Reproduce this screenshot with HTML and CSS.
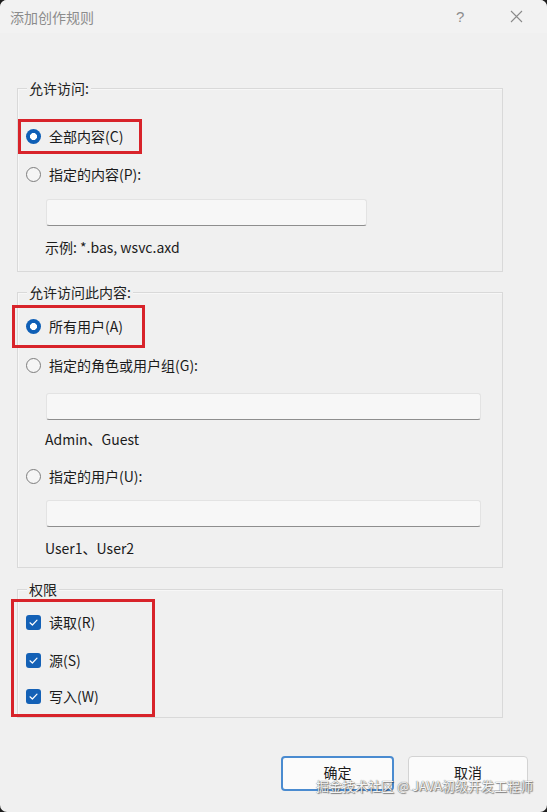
FILE: index.html
```html
<!DOCTYPE html>
<html lang="zh-CN">
<head>
<meta charset="utf-8">
<title>添加创作规则</title>
<link rel="stylesheet" href="styles.css">
</head>
<body>
<div class="window">
  <div class="titlebar">
    <span class="title">添加创作规则</span>
    <span class="help">?</span>
    <span class="close">
      <svg width="13" height="13" viewBox="0 0 13 13"><path d="M1 1 L12 12 M12 1 L1 12" stroke="#8a8a8a" stroke-width="1.1" fill="none"/></svg>
    </span>
  </div>

  <div class="group g1">
    <div class="legend">允许访问:</div>
    <div class="mark mark1">
      <div class="row"><span class="radio on"></span><span>全部内容(C)</span></div>
    </div>
    <div class="row r2"><span class="radio"></span><span>指定的内容(P):</span></div>
    <div class="input in1"></div>
    <div class="hint h1">示例: *.bas, wsvc.axd</div>
  </div>

  <div class="group g2">
    <div class="legend">允许访问此内容:</div>
    <div class="mark mark2">
      <div class="row"><span class="radio on"></span><span>所有用户(A)</span></div>
    </div>
    <div class="row r4"><span class="radio"></span><span>指定的角色或用户组(G):</span></div>
    <div class="input in2"></div>
    <div class="hint h2">Admin、Guest</div>
    <div class="row r5"><span class="radio"></span><span>指定的用户(U):</span></div>
    <div class="input in3"></div>
    <div class="hint h3">User1、User2</div>
  </div>

  <div class="group g3">
    <div class="legend">权限</div>
    <div class="mark mark3">
      <div class="row"><span class="check"><svg width="15" height="15" viewBox="0 0 15 15"><path d="M4 7.8 L6.4 10 L11 5.2" stroke="#fff" stroke-width="1.2" fill="none" stroke-linecap="round" stroke-linejoin="round"/></svg></span><span>读取(R)</span></div>
      <div class="row c2"><span class="check"><svg width="15" height="15" viewBox="0 0 15 15"><path d="M4 7.8 L6.4 10 L11 5.2" stroke="#fff" stroke-width="1.2" fill="none" stroke-linecap="round" stroke-linejoin="round"/></svg></span><span>源(S)</span></div>
      <div class="row c3"><span class="check"><svg width="15" height="15" viewBox="0 0 15 15"><path d="M4 7.8 L6.4 10 L11 5.2" stroke="#fff" stroke-width="1.2" fill="none" stroke-linecap="round" stroke-linejoin="round"/></svg></span><span>写入(W)</span></div>
    </div>
  </div>

  <div class="footer">
    <button class="btn primary">确定</button>
    <button class="btn">取消</button>
  </div>

  <div class="watermark">掘金技术社区 @ JAVA初级开发工程师</div>
</div>
</body>
</html>
```

FILE: styles.css
```css
* { box-sizing: border-box; }
html, body { margin: 0; padding: 0; }
body {
  background: #1e1e1e;
  font-family: "Noto Sans CJK SC", "Noto Sans", sans-serif;
  font-size: 14px;
  color: #1b1b1b;
}
.window {
  position: relative;
  width: 547px;
  height: 812px;
  background: #f0f0f0;
  border-radius: 7px;
  overflow: hidden;
}
.titlebar {
  height: 33px;
  display: flex;
  align-items: center;
  padding-left: 10px;
  background: #f2f2f2;
}
.title { color: #8c8c8c; font-size: 14px; flex: 1; }
.help { color: #8c8c8c; font-size: 15px; width: 14px; margin-right: 40px; font-family: "Liberation Sans", sans-serif; }
.close { width: 13px; height: 13px; margin-right: 24px; display: flex; }

.group {
  margin: 0 44px 0 17px;
  border: 1px solid #d9d9d9;
  box-shadow: inset 1px 1px 0 #f7f7f7;
  padding: 0 0 0 8px;
}
.g1 { margin-top: 55px; padding-bottom: 14px; }
.g2 { margin-top: 20px; padding-bottom: 9px; }
.g3 { margin-top: 21px; padding-bottom: 0; }

.legend {
  margin-top: -11px;
  margin-left: 1px;
  width: fit-content;
  padding: 0 2px;
  line-height: 20px;
  height: 20px;
  background: #f0f0f0;
  color: #222;
}

.row {
  display: flex;
  align-items: center;
  gap: 8px;
  height: 20px;
  line-height: 20px;
  white-space: nowrap;
}

.mark { border: 3px solid #d8232a; }
.mark1 { width: 124px; margin: 21px 0 0 -8px; padding: 4px 0 5px 5px; }
.mark2 { width: 133px; margin: 3px 0 0 -14px; padding: 8px 0 9px 11px; }
.mark3 { width: 144px; margin: 0 0 0 -15px; padding: 10px 0 8px 12px; }
.c2 { margin-top: 18px; }
.c3 { margin-top: 16px; }

.r2 { margin-top: 10px; }
.r4 { margin-top: 7px; }
.r5 { margin-top: 17px; }

.radio {
  width: 15px; height: 15px;
  border-radius: 50%;
  border: 1px solid #7d7d7d;
  background: #f5f5f5;
  flex: none;
}
.radio.on {
  border: none;
  background: radial-gradient(circle, #ffffff 0 3.2px, #0f5fb6 3.8px);
}
.check {
  width: 15px; height: 15px;
  border-radius: 3px;
  background: #1461b6;
  flex: none;
  display: flex;
}

.input {
  height: 27px;
  margin-left: 20px;
  background: #f7f7f7;
  border: 1px solid #e3e3e3;
  border-bottom: 1px solid #8e8e8e;
  border-radius: 3px;
}
.in1 { width: 321px; margin-top: 15px; }
.in2 { width: 435px; margin-top: 18px; }
.in3 { width: 435px; margin-top: 14px; }

.hint { margin-left: 19px; line-height: 20px; height: 20px; margin-top: 11px; }
.h2 { margin-top: 9px; }
.h3 { margin-top: 11px; }

.footer {
  display: flex;
  justify-content: flex-end;
  gap: 14px;
  margin-top: 38px;
  padding-right: 19px;
}
.btn {
  height: 35px;
  font-family: inherit;
  font-size: 14px;
  line-height: 20px;
  color: #1b1b1b;
  background: #fbfbfb;
  border: 1px solid #d3d3d3;
  border-radius: 4px;
  padding: 0 0 3px 0;
}
.btn.primary { width: 113px; border: 2px solid #4a8bd0; }
.btn:not(.primary) { width: 120px; }

.watermark {
  position: absolute;
  left: 316px;
  top: 776px;
  line-height: 20px;
  font-size: 13px;
  color: #f4f4f4;
  white-space: nowrap;
  text-shadow: 0 0 1px #444, 1px 1px 1px rgba(0,0,0,0.45);
}
```
